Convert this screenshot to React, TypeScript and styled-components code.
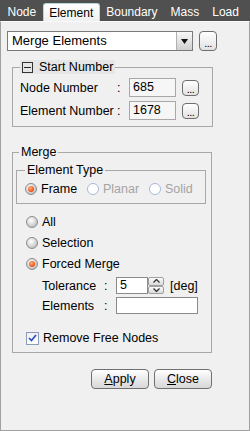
import styled, { createGlobalStyle, css } from "styled-components";

const GlobalStyle = createGlobalStyle`
  html, body {
    margin: 0;
    padding: 0;
    background: #f0f0f0;
  }
  body {
    font-family: "Liberation Sans", Arial, sans-serif;
    font-size: 12.5px;
    color: #000;
  }
`;

const Window = styled.div`
  width: 250px;
  height: 431px;
  display: flex;
  flex-direction: column;
  overflow: hidden;
`;

const TabBar = styled.div`
  height: 21px;
  flex-shrink: 0;
  background: #505050;
  display: flex;
  align-items: flex-end;
  padding-left: 1px;
  box-sizing: border-box;
`;

const Tab = styled.div<{ $active?: boolean }>`
  height: 18px;
  line-height: 18px;
  padding: 0 6.5px;
  font-size: 12px;
  color: #fff;
  box-sizing: border-box;
  ${(p) =>
    p.$active &&
    css`
      background: linear-gradient(#ffffff, #eef0f0);
      color: #000;
      border: 1px solid #b8d4dc;
      border-bottom: none;
      border-radius: 3px 3px 0 0;
      padding: 0 5.5px;
    `}
`;

const Panel = styled.div`
  flex: 1;
  background: #f0f0f0;
  border: 1px solid #a0a0a0;
  border-top: 1px solid #fafafa;
  padding: 9px 6px 0 6px;
  display: flex;
  flex-direction: column;
  box-sizing: border-box;
`;

const ComboRow = styled.div`
  display: flex;
  align-items: center;
  gap: 6px;
  height: 20px;
`;

const Combo = styled.div`
  width: 186px;
  height: 20px;
  box-sizing: border-box;
  border: 1px solid #7a7a7a;
  background: #fff;
  display: flex;
  align-items: stretch;
`;

const ComboText = styled.div`
  flex: 1;
  padding-left: 4px;
  line-height: 18px;
  font-size: 13px;
`;

const ComboArrow = styled.div`
  width: 15px;
  background: linear-gradient(#f8f8f8, #cfcfcf);
  border-left: 1px solid #b0b0b0;
  display: flex;
  align-items: center;
  justify-content: center;
`;

const DotsButton = styled.div<{ $small?: boolean }>`
  width: ${(p) => (p.$small ? 17 : 18)}px;
  height: ${(p) => (p.$small ? 16 : 20)}px;
  box-sizing: border-box;
  border: 1px solid #6e6e6e;
  border-radius: 4px;
  background: linear-gradient(#ffffff, #e2e2e2);
  font-size: 11px;
  line-height: ${(p) => (p.$small ? 16 : 22)}px;
  text-align: center;
  letter-spacing: -0.5px;
`;

const Group = styled.fieldset<{ $width: number; $top: number }>`
  margin: ${(p) => p.$top}px 0 0 5px;
  width: ${(p) => p.$width}px;
  box-sizing: border-box;
  border: 1px solid #a8a8a8;
  padding: 4px 7px 6px 7px;
  min-inline-size: 0;
`;

const Legend = styled.legend<{ $shade?: boolean; $offset?: number }>`
  padding: 0 2px;
  margin-left: ${(p) => p.$offset ?? 0}px;
  line-height: 14px;
  display: flex;
  align-items: center;
  gap: 6px;
  ${(p) => p.$shade && "background: #e6e6e6;"}
`;

const CollapseIcon = styled.span`
  width: 9px;
  height: 9px;
  border: 1px solid #333;
  position: relative;
  &::after {
    content: "";
    position: absolute;
    left: 1px;
    right: 1px;
    top: 4px;
    height: 1px;
    background: #222;
  }
`;

const NumberRows = styled.div`
  display: flex;
  flex-direction: column;
  gap: 4px;
`;

const FieldRow = styled.div`
  display: flex;
  align-items: center;
`;

const Label = styled.span<{ $width: number }>`
  width: ${(p) => p.$width}px;
  white-space: nowrap;
`;

const Colon = styled.span`
  width: 13px;
  padding-left: 1px;
  box-sizing: border-box;
`;

const TextBox = styled.div<{ $width: number; $height: number; $readonly?: boolean }>`
  width: ${(p) => p.$width}px;
  height: ${(p) => p.$height}px;
  box-sizing: border-box;
  border: 1px solid ${(p) => (p.$readonly ? "#a8a8a8" : "#8a8a8a")};
  background: ${(p) => (p.$readonly ? "#f6f6f6" : "#fff")};
  padding-left: 3px;
  line-height: ${(p) => p.$height - 2}px;
`;

const InnerGroup = styled.fieldset`
  margin: 0;
  border: 1px solid #a8a8a8;
  padding: 5px 8px 7px 8px;
  min-inline-size: 0;
`;

const RadioLine = styled.div`
  display: flex;
  height: 14px;
  align-items: center;
`;

const RadioItem = styled.label<{ $width?: number; $disabled?: boolean }>`
  display: flex;
  align-items: center;
  gap: 4px;
  height: 14px;
  ${(p) => p.$width && `width: ${p.$width}px;`}
  color: ${(p) => (p.$disabled ? "#a4a4a4" : "#000")};
`;

const RadioDot = styled.span<{ $state: "on" | "off" | "disabled" }>`
  width: 12px;
  height: 12px;
  box-sizing: border-box;
  border-radius: 50%;
  flex-shrink: 0;
  position: relative;
  ${(p) =>
    p.$state === "disabled"
      ? css`
          border: 1px solid #a9b9d9;
          background: #fff;
        `
      : css`
          border: 1px solid #8c8c8c;
          background: radial-gradient(circle at 40% 35%, #ffffff 0%, #dcdcdc 45%, #a8a8a8 100%);
        `}
  ${(p) =>
    p.$state === "on" &&
    css`
      &::after {
        content: "";
        position: absolute;
        left: 2px;
        top: 2px;
        width: 6px;
        height: 6px;
        border-radius: 50%;
        background: radial-gradient(circle at 40% 35%, #ffb080 0%, #f25a1e 60%, #c83c10 100%);
      }
    `}
`;

const OptionList = styled.div`
  display: flex;
  flex-direction: column;
  padding-left: 10px;
  margin-top: 11px;
  gap: 7px;
`;

const SubFields = styled.div`
  display: flex;
  flex-direction: column;
  gap: 3px;
  margin-top: -1px;
  padding-left: 16px;
`;

const Spinner = styled.div`
  width: 16px;
  height: 17px;
  display: flex;
  flex-direction: column;
`;

const SpinHalf = styled.div`
  flex: 1;
  box-sizing: border-box;
  border: 1px solid #a0a0a0;
  border-radius: 2px;
  background: linear-gradient(#fbfbfb, #dadada);
  display: flex;
  align-items: center;
  justify-content: center;
`;

const Unit = styled.span`
  margin-left: 6px;
`;

const CheckRow = styled.label`
  display: flex;
  align-items: center;
  gap: 4px;
  padding-left: 10px;
  margin-top: 17px;
  height: 14px;
`;

const CheckBox = styled.span`
  width: 13px;
  height: 13px;
  box-sizing: border-box;
  border: 1px solid #8c9cb8;
  background: linear-gradient(#f0f0f0, #ffffff);
  display: flex;
  align-items: center;
  justify-content: center;
`;

const ButtonRow = styled.div`
  display: flex;
  justify-content: flex-end;
  gap: 5px;
  width: 200px;
  margin: 16px 0 0 5px;
`;

const PushButton = styled.div`
  width: 58px;
  height: 20px;
  box-sizing: border-box;
  border: 1px solid #707070;
  border-radius: 4px;
  background: linear-gradient(#ffffff, #e6e6e6 60%, #d8d8d8);
  text-align: center;
  line-height: 18px;
  font-size: 12.5px;
`;

const Arrow = ({ up }: { up?: boolean }) => (
  <svg width="7" height="4" viewBox="0 0 7 4">
    <polyline
      points={up ? "0.5,3.5 3.5,0.5 6.5,3.5" : "0.5,0.5 3.5,3.5 6.5,0.5"}
      fill="none"
      stroke="#333"
      strokeWidth="1.3"
    />
  </svg>
);

const App = () => {
  const tabs = ["Node", "Element", "Boundary", "Mass", "Load"];
  return (
    <Window>
      <GlobalStyle />
      <TabBar>
        {tabs.map((t) => (
          <Tab key={t} $active={t === "Element"}>
            {t}
          </Tab>
        ))}
      </TabBar>
      <Panel>
        <ComboRow>
          <Combo>
            <ComboText>Merge Elements</ComboText>
            <ComboArrow>
              <svg width="7" height="5" viewBox="0 0 7 5">
                <polygon points="0,0 7,0 3.5,5" fill="#111" />
              </svg>
            </ComboArrow>
          </Combo>
          <DotsButton>...</DotsButton>
        </ComboRow>

        <Group $width={201} $top={9}>
          <Legend $shade>
            <CollapseIcon />
            Start Number
          </Legend>
          <NumberRows>
            <FieldRow>
              <Label $width={96}>Node Number</Label>
              <Colon>:</Colon>
              <TextBox $width={47} $height={19} $readonly>
                685
              </TextBox>
              <span style={{ width: 6 }} />
              <DotsButton $small>...</DotsButton>
            </FieldRow>
            <FieldRow>
              <Label $width={96}>Element Number</Label>
              <Colon>:</Colon>
              <TextBox $width={47} $height={19} $readonly>
                1678
              </TextBox>
              <span style={{ width: 6 }} />
              <DotsButton $small>...</DotsButton>
            </FieldRow>
          </NumberRows>
        </Group>

        <Group $width={200} $top={18} style={{ padding: "4px 5px 7px 3px" }}>
          <Legend $offset={3}>Merge</Legend>
          <InnerGroup>
            <Legend>Element Type</Legend>
            <RadioLine>
              <RadioItem $width={62}>
                <RadioDot $state="on" />
                Frame
              </RadioItem>
              <RadioItem $width={62} $disabled>
                <RadioDot $state="disabled" />
                Planar
              </RadioItem>
              <RadioItem $disabled>
                <RadioDot $state="disabled" />
                Solid
              </RadioItem>
            </RadioLine>
          </InnerGroup>

          <OptionList>
            <RadioItem>
              <RadioDot $state="off" />
              All
            </RadioItem>
            <RadioItem>
              <RadioDot $state="off" />
              Selection
            </RadioItem>
            <RadioItem>
              <RadioDot $state="on" />
              Forced Merge
            </RadioItem>
            <SubFields>
              <FieldRow>
                <Label $width={61}>Tolerance</Label>
                <Colon>:</Colon>
                <TextBox $width={32} $height={17}>
                  5
                </TextBox>
                <Spinner>
                  <SpinHalf>
                    <Arrow up />
                  </SpinHalf>
                  <SpinHalf>
                    <Arrow />
                  </SpinHalf>
                </Spinner>
                <Unit>[deg]</Unit>
              </FieldRow>
              <FieldRow>
                <Label $width={61}>Elements</Label>
                <Colon>:</Colon>
                <TextBox $width={82} $height={17} />
              </FieldRow>
            </SubFields>
          </OptionList>

          <CheckRow>
            <CheckBox>
              <svg width="9" height="8" viewBox="0 0 9 8">
                <polyline
                  points="1,4 3.5,6.5 8,1"
                  fill="none"
                  stroke="#2a4ec8"
                  strokeWidth="1.7"
                />
              </svg>
            </CheckBox>
            Remove Free Nodes
          </CheckRow>
        </Group>

        <ButtonRow>
          <PushButton>
            <u>A</u>pply
          </PushButton>
          <PushButton>
            <u>C</u>lose
          </PushButton>
        </ButtonRow>
      </Panel>
    </Window>
  );
};

export default App;
